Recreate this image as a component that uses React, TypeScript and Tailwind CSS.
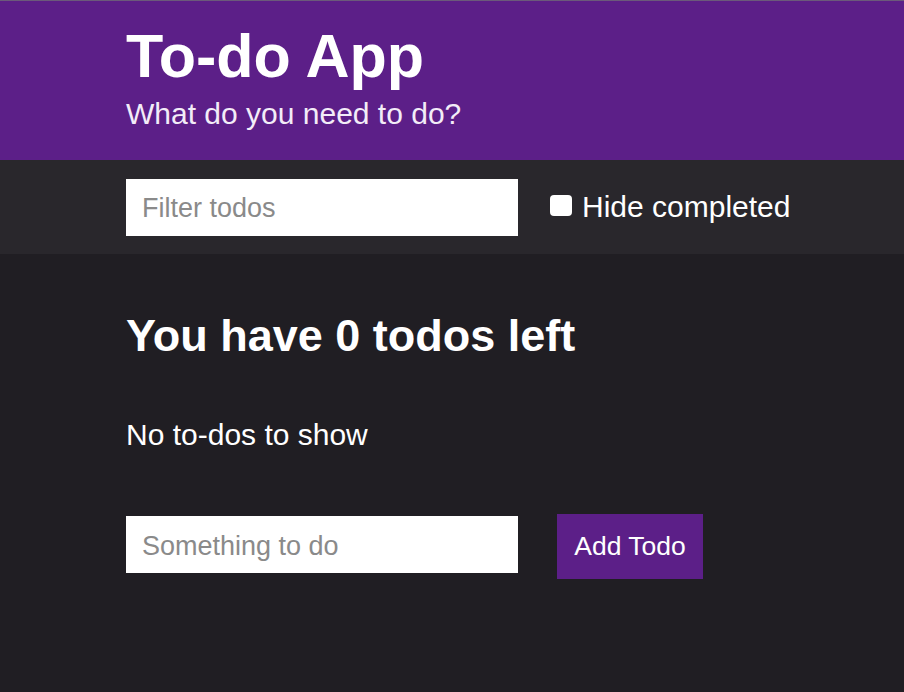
import { useState } from "react";

type Todo = {
  id: number;
  text: string;
  completed: boolean;
};

export default function App() {
  const [todos, setTodos] = useState<Todo[]>([]);
  const [filter, setFilter] = useState("");
  const [hideCompleted, setHideCompleted] = useState(false);
  const [draft, setDraft] = useState("");

  const left = todos.filter((todo) => !todo.completed).length;
  const visible = todos.filter(
    (todo) =>
      todo.text.toLowerCase().includes(filter.toLowerCase()) && (!hideCompleted || !todo.completed)
  );

  const addTodo = (event: React.FormEvent<HTMLFormElement>) => {
    event.preventDefault();
    if (!draft.trim()) return;
    setTodos((prev) => [...prev, { id: Date.now(), text: draft.trim(), completed: false }]);
    setDraft("");
  };

  return (
    <div className="min-h-[692px] bg-[#201e23] font-['Liberation_Sans',Arial,sans-serif] text-white">
      <header className="h-[160px] border-t border-[#6b5a7a] bg-[#5c1f88] pl-[126px] pt-[19px]">
        <h1 className="text-[61px] leading-[72px] font-bold">To-do App</h1>
        <p className="mt-[4px] text-[30px] leading-[36px] text-[#f3ecf8]">What do you need to do?</p>
      </header>

      <div className="flex h-[94px] items-center gap-8 bg-[#29272c] pl-[126px]">
        <input
          className="h-[57px] w-[392px] bg-white px-4 pt-[3px] text-[27px] text-[#333] outline-none placeholder:text-[#8a8a8a]"
          placeholder="Filter todos"
          value={filter}
          onChange={(event) => setFilter(event.target.value)}
        />
        <label className="flex cursor-pointer items-center gap-[10px] text-[30px] leading-none">
          <input
            type="checkbox"
            className="peer sr-only"
            checked={hideCompleted}
            onChange={(event) => setHideCompleted(event.target.checked)}
          />
          <span className="mb-1 h-[21px] w-[22px] rounded-[4px] bg-white peer-checked:bg-[#5c1f88]" />
          <span>Hide completed</span>
        </label>
      </div>

      <main className="pl-[126px] pt-[56px]">
        <h2 className="text-[45px] leading-[52px] font-bold">You have {left} todos left</h2>

        {visible.length === 0 ? (
          <p className="mt-[55px] text-[30px] leading-[36px]">No to-dos to show</p>
        ) : (
          <ul className="mt-[55px] grid gap-3">
            {visible.map((todo) => (
              <li key={todo.id} className="flex items-center gap-3 text-[30px] leading-[36px]">
                <input
                  type="checkbox"
                  className="h-5 w-5"
                  checked={todo.completed}
                  onChange={() =>
                    setTodos((prev) =>
                      prev.map((item) => (item.id === todo.id ? { ...item, completed: !item.completed } : item))
                    )
                  }
                />
                <span className={todo.completed ? "line-through opacity-60" : ""}>{todo.text}</span>
              </li>
            ))}
          </ul>
        )}

        <form className="mt-[57px] flex items-center gap-[39px]" onSubmit={addTodo}>
          <input
            className="h-[57px] w-[392px] bg-white px-4 pt-[3px] text-[27px] text-[#333] outline-none placeholder:text-[#8a8a8a]"
            placeholder="Something to do"
            value={draft}
            onChange={(event) => setDraft(event.target.value)}
          />
          <button type="submit" className="mt-[4px] h-[65px] w-[146px] bg-[#5c1f88] text-[26.5px] text-white">
            Add Todo
          </button>
        </form>
      </main>
    </div>
  );
}
